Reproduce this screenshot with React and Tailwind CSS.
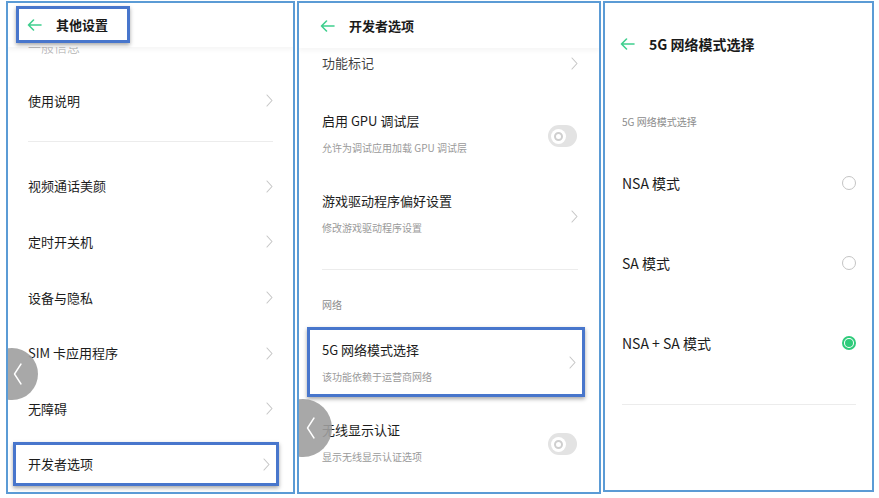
import React from 'react'

const font = { fontFamily: '"Noto Sans CJK SC", "Noto Sans", sans-serif' }

function BackArrow() {
  return (
    <svg width="15" height="12" viewBox="0 0 15 12" fill="none" stroke="#3fcf8e" strokeWidth="1.6" strokeLinecap="round" strokeLinejoin="round">
      <path d="M14 6H1.5M6.5 1L1.5 6l5 5" />
    </svg>
  )
}

function Chevron() {
  return (
    <svg width="7" height="13" viewBox="0 0 7 13" fill="none" stroke="#c6c6c6" strokeWidth="1.1" strokeLinecap="round" strokeLinejoin="round">
      <path d="M1 1l5 5.5L1 12" />
    </svg>
  )
}

function Toggle() {
  return (
    <div className="w-[29px] h-[22px] rounded-full bg-[#e3e3e3] flex items-center pl-[3px]">
      <div className="w-[15px] h-[15px] rounded-full bg-white flex items-center justify-center">
        <div className="w-[9px] h-[9px] rounded-full border-[2px] border-[#cfcfcf]" />
      </div>
    </div>
  )
}

function Radio({ checked }) {
  if (checked) {
    return (
      <div className="w-[14px] h-[14px] rounded-full border-[2px] border-[#2ecb7a] flex items-center justify-center">
        <div className="w-[8px] h-[8px] rounded-full bg-[#2ecb7a]" />
      </div>
    )
  }
  return <div className="w-[14px] h-[14px] rounded-full border border-[#c4c4c4]" />
}

function FloatBack({ className }) {
  return (
    <div className={`absolute rounded-full bg-[#9e9e9e]/90 flex items-center justify-end ${className}`}>
      <svg width="9" height="22" viewBox="0 0 9 22" fill="none" stroke="#ffffff" strokeWidth="1.4" strokeLinecap="round" strokeLinejoin="round">
        <path d="M8 1L1.5 11 8 21" />
      </svg>
    </div>
  )
}

function Row1({ label }) {
  return (
    <div className="h-[55.7px] flex items-center justify-between pl-[20px] pr-[20px]">
      <span className="text-[13px] text-[#1c1c1c]">{label}</span>
      <Chevron />
    </div>
  )
}

function PanelOne() {
  return (
    <div className="relative w-[289px] h-[493px] border-2 border-[#5b9bd5] overflow-hidden bg-white flex flex-col">
      <div className="h-[44px] pt-[3px] pl-[8px] bg-white relative z-10 shadow-[0_3px_4px_rgba(0,0,0,0.04)]">
        <div className="w-[114px] h-[37px] border-[3px] border-[#4876cc] shadow-[0_2px_4px_rgba(0,0,0,0.35)] flex items-center pl-[8px] gap-[14px]">
          <BackArrow />
          <span className="text-[13px] font-bold text-[#1a1a1a]">其他设置</span>
        </div>
      </div>
      {/* list scrolled under the header */}
      <div className="h-[26px] overflow-hidden pl-[20px]">
        <div className="-mt-[9px] text-[13px] leading-[18px] text-[#1c1c1c]/30">一般信息</div>
      </div>
      <Row1 label="使用说明" />
      <div className="h-[13px]" />
      <div className="mx-[20px] h-px bg-[#ececec]" />
      <div className="h-[16px]" />
      <Row1 label="视频通话美颜" />
      <Row1 label="定时开关机" />
      <Row1 label="设备与隐私" />
      <Row1 label="SIM 卡应用程序" />
      <Row1 label="无障碍" />
      <div className="h-[55.7px] flex items-center pl-[5px]">
        <div className="w-[266px] h-[44px] border-[3px] border-[#4876cc] shadow-[0_2px_4px_rgba(0,0,0,0.35)] flex items-center justify-between pl-[12px] pr-[6px]">
          <span className="text-[13px] text-[#1c1c1c]">开发者选项</span>
          <Chevron />
        </div>
      </div>
      <FloatBack className="left-[-22px] top-[345px] w-[52px] h-[52px] pr-[16px]" />
    </div>
  )
}

function TwoLine({ title, sub }) {
  return (
    <div className="flex flex-col">
      <span className="text-[13px] leading-[18px] text-[#1c1c1c]">{title}</span>
      <span className="mt-[11px] text-[10px] leading-[14px] text-[#9a9a9a]">{sub}</span>
    </div>
  )
}

function PanelTwo() {
  return (
    <div className="relative w-[304px] h-[493px] border-2 border-[#5b9bd5] overflow-hidden bg-white flex flex-col">
      <div className="h-[45px] flex items-center pl-[21px] gap-[14px] bg-white relative z-10 shadow-[0_3px_4px_rgba(0,0,0,0.04)]">
        <BackArrow />
        <span className="text-[13px] font-bold text-[#1a1a1a]">开发者选项</span>
      </div>
      <div className="h-[48px] flex items-start justify-between pl-[23px] pr-[21px] pt-[6px]">
        <span className="text-[13px] leading-[18px] text-[#1c1c1c]/85">功能标记</span>
        <div className="pt-[3px]"><Chevron /></div>
      </div>
      <div className="h-[80px] flex items-center justify-between pl-[23px] pr-[22px]">
        <div className="pb-[5px]">
          <TwoLine title="启用 GPU 调试层" sub="允许为调试应用加载 GPU 调试层" />
        </div>
        <Toggle />
      </div>
      <div className="h-[80px] flex items-center justify-between pl-[23px] pr-[21px]">
        <div className="pb-[6px]">
          <TwoLine title="游戏驱动程序偏好设置" sub="修改游戏驱动程序设置" />
        </div>
        <Chevron />
      </div>
      <div className="h-[13px]" />
      <div className="ml-[23px] mr-[21px] h-px bg-[#ececec]" />
      <div className="h-[57px] pl-[23px] pt-[28px]">
        <span className="block text-[10px] leading-[14px] text-[#8c8c8c]">网络</span>
      </div>
      <div className="ml-[8px] w-[278px] h-[70px] border-[3px] border-[#4876cc] shadow-[0_2px_4px_rgba(0,0,0,0.35)] flex items-center justify-between pl-[12px] pr-[6px]">
        <TwoLine title="5G 网络模式选择" sub="该功能依赖于运营商网络" />
        <Chevron />
      </div>
      <div className="h-[7px]" />
      <div className="h-[80px] flex items-center justify-between pl-[23px] pr-[22px]">
        <div className="pb-[3px]">
          <TwoLine title="无线显示认证" sub="显示无线显示认证选项" />
        </div>
        <Toggle />
      </div>
      <FloatBack className="left-[-25px] top-[396px] w-[58px] h-[58px] pr-[17px]" />
    </div>
  )
}

function RadioRow({ label, checked }) {
  return (
    <div className="h-[80px] flex items-center justify-between pl-[17px] pr-[16px]">
      <span className="text-[14px] text-[#1c1c1c]">{label}</span>
      <Radio checked={checked} />
    </div>
  )
}

function PanelThree() {
  return (
    <div className="relative w-[271px] h-[491px] border-2 border-[#5b9bd5] overflow-hidden bg-white flex flex-col">
      <div className="h-[82px] flex items-center pl-[15px] gap-[14px]">
        <BackArrow />
        <span className="text-[14px] font-bold text-[#1a1a1a]">5G 网络模式选择</span>
      </div>
      <div className="h-[58px] pl-[17px] pt-[30px]">
        <span className="block text-[10px] leading-[14px] text-[#8c8c8c]">5G 网络模式选择</span>
      </div>
      <RadioRow label="NSA 模式" />
      <RadioRow label="SA 模式" />
      <RadioRow label="NSA + SA 模式" checked />
      <div className="h-[21px]" />
      <div className="ml-[17px] mr-[16px] h-px bg-[#ececec]" />
    </div>
  )
}

export default function App() {
  return (
    <div className="w-[879px] h-[498px] bg-white flex items-start pt-[1px] pl-[6px] gap-[2px]" style={font}>
      <PanelOne />
      <PanelTwo />
      <PanelThree />
    </div>
  )
}
